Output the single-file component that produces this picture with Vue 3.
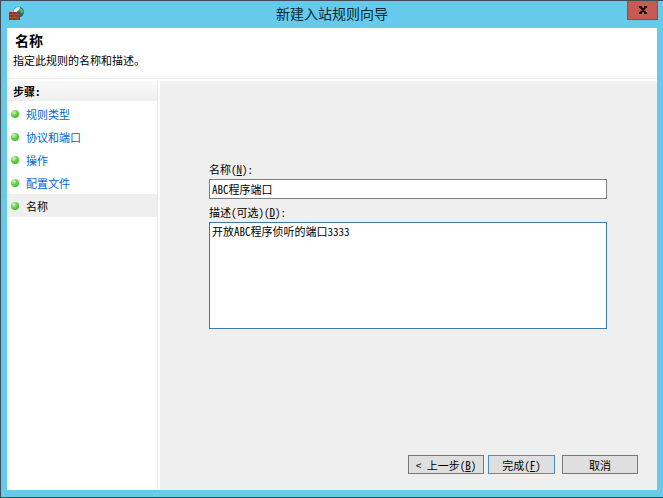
<template>
  <div class="window">
    <header class="title-bar">
      <svg class="app-icon" viewBox="0 0 16 16" aria-hidden="true">
        <circle cx="9.500" cy="6" r="5.500" fill="#2a78b8" />
        <path d="M5 3.500 Q8 0 11 1 L10.500 3.500 L8.500 5 L7 7 L4.500 6 Z" fill="#d3f0f4" />
        <path d="M11 2 Q14 3 14.500 6 L12.500 7 L11 5 Z" fill="#62b548" />
        <path d="M11 8 L14.500 7.500 Q13.500 10.500 11 11 Z" fill="#2d6b3a" />
        <rect x="0" y="6" width="11" height="8" fill="#8f3420" />
        <path d="M0 8.500 H11 M0 11.500 H11 M3.500 6 V8.500 M8 6 V8.500 M5.500 8.500 V11.500 M3 11.500 V14 M8 11.500 V14" stroke="#b8634a" stroke-width="0.6" />
      </svg>
      <h1 class="title">新建入站规则向导</h1>
      <button type="button" class="close-btn" aria-label="关闭">
        <svg viewBox="0 0 8 8" aria-hidden="true">
          <path d="M0 1 H3 M5 1 H8 M0 7 H3 M5 7 H8 M1.500 1 L6.500 7 M6.500 1 L1.500 7" fill="none" stroke="#160808" stroke-width="2" />
        </svg>
      </button>
    </header>

    <div class="client">
      <div class="page-header">
        <h2>名称</h2>
        <p>指定此规则的名称和描述。</p>
      </div>

      <div class="body">
        <nav class="sidebar">
          <h3>步骤:</h3>
          <ul>
            <li v-for="paso in pasos" :key="paso" :class="{ active: paso === actual }">
              <span class="dot"></span>
              <span v-if="paso === actual">{{ paso }}</span>
              <a v-else href="#">{{ paso }}</a>
            </li>
          </ul>
        </nav>

        <form class="main" @submit.prevent>
          <div class="fields">
            <label for="nombre">名称(<u>N</u>):</label>
            <input id="nombre" v-model="nombre" type="text" />
            <label for="descripcion">描述(可选)(<u>D</u>):</label>
            <textarea id="descripcion" v-model="descripcion" spellcheck="false"></textarea>
          </div>

          <div class="buttons">
            <button type="button" class="btn">&lt; 上一步(<u>B</u>)</button>
            <button type="submit" class="btn finish">完成(<u>F</u>)</button>
            <button type="button" class="btn cancel">取消</button>
          </div>
        </form>
      </div>
    </div>
  </div>
</template>

<script setup>
import { ref } from 'vue'

const pasos = ['规则类型', '协议和端口', '操作', '配置文件', '名称']
const actual = ref('名称')
const nombre = ref('ABC程序端口')
const descripcion = ref('开放ABC程序侦听的端口3333')
</script>

<style>
body {
  margin: 0;
}
</style>

<style scoped>
.window {
  box-sizing: border-box;
  min-height: 100vh;
  display: flex;
  flex-direction: column;
  padding: 0 6px 7px;
  border: 1px solid #3f4d59;
  border-right: none;
  background-color: #66cbea;
  color: #000;
  font-family: "Noto Sans CJK SC", "Liberation Sans", sans-serif;
  font-size: 11px;
  line-height: 16px;
  /* latin letters take half the width of a hanzi */
  font-feature-settings: "hwid";
}

h1,
h2,
h3,
p,
ul {
  margin: 0;
  padding: 0;
}

.title-bar {
  display: flex;
  align-items: flex-start;
  height: 27px;
}

.app-icon {
  width: 16px;
  height: 16px;
  margin: 5px 0 0 2px;
}

.title {
  flex: 1;
  text-align: center;
  font-size: 14px;
  font-weight: normal;
  line-height: 24px;
  margin-left: 12px;
  color: #0c2730;
}

.close-btn {
  box-sizing: border-box;
  width: 31px;
  height: 19px;
  margin-right: -1px;
  padding: 0;
  display: flex;
  align-items: center;
  justify-content: center;
  border: 1px solid #8f4a48;
  border-top: none;
  background-color: #c75b52;
}

.close-btn svg {
  width: 8px;
  height: 8px;
}

.client {
  flex: 1;
  display: flex;
  flex-direction: column;
  background-color: #fff;
}

.page-header {
  padding: 1px 6px 9px;
  border-bottom: 1px solid #ececec;
}

.page-header h2 {
  padding-left: 2px;
  font-size: 14px;
  line-height: 22px;
}

.page-header p {
  line-height: 18px;
}

.body {
  flex: 1;
  display: flex;
  padding-top: 2px;
}

.sidebar {
  width: 150px;
  border-right: 1px solid #ececec;
  margin-right: 2px;
}

.sidebar h3 {
  padding-left: 6px;
  font-size: 11px;
  line-height: 20px;
  background: linear-gradient(#fafafa, #efefef);
}

.sidebar ul {
  list-style: none;
  padding-top: 1px;
}

.sidebar li {
  display: flex;
  align-items: center;
  gap: 7px;
  height: 23px;
  padding-left: 4px;
}

.sidebar li.active {
  background-color: #efefef;
}

.sidebar a {
  color: #0066cc;
  text-decoration: none;
}

.dot {
  width: 8px;
  height: 8px;
  border-radius: 50%;
  background: radial-gradient(circle at 35% 30%, #d5f5c5 0, #5fd03f 45%, #37a526 100%);
}

.main {
  flex: 1;
  display: flex;
  flex-direction: column;
  justify-content: space-between;
  padding: 79px 19px 16px 49px;
  background-color: #efefef;
}

.fields {
  display: flex;
  flex-direction: column;
  margin-right: 31px;
}

.fields label {
  padding-bottom: 1px;
  line-height: 18px;
}

.fields input,
.fields textarea {
  box-sizing: border-box;
  width: 100%;
  padding: 0 2px;
  border: 1px solid #7d7d7d;
  border-radius: 0;
  background-color: #fff;
  color: #000;
  font: inherit;
  font-feature-settings: inherit;
  outline: none;
}

.fields input {
  height: 20px;
  margin-bottom: 4px;
}

.fields textarea {
  height: 107px;
  resize: none;
  border-color: #3f79a6;
}

.buttons {
  display: flex;
  justify-content: flex-end;
}

.btn {
  box-sizing: border-box;
  width: 76px;
  height: 19px;
  padding: 0;
  border: 1px solid #777;
  background-color: #dfdfdf;
  color: #000;
  font: inherit;
  font-feature-settings: inherit;
}

.btn.finish {
  width: 67px;
  margin: 0 7px 0 4px;
  border-color: #4a90c2;
}
</style>
